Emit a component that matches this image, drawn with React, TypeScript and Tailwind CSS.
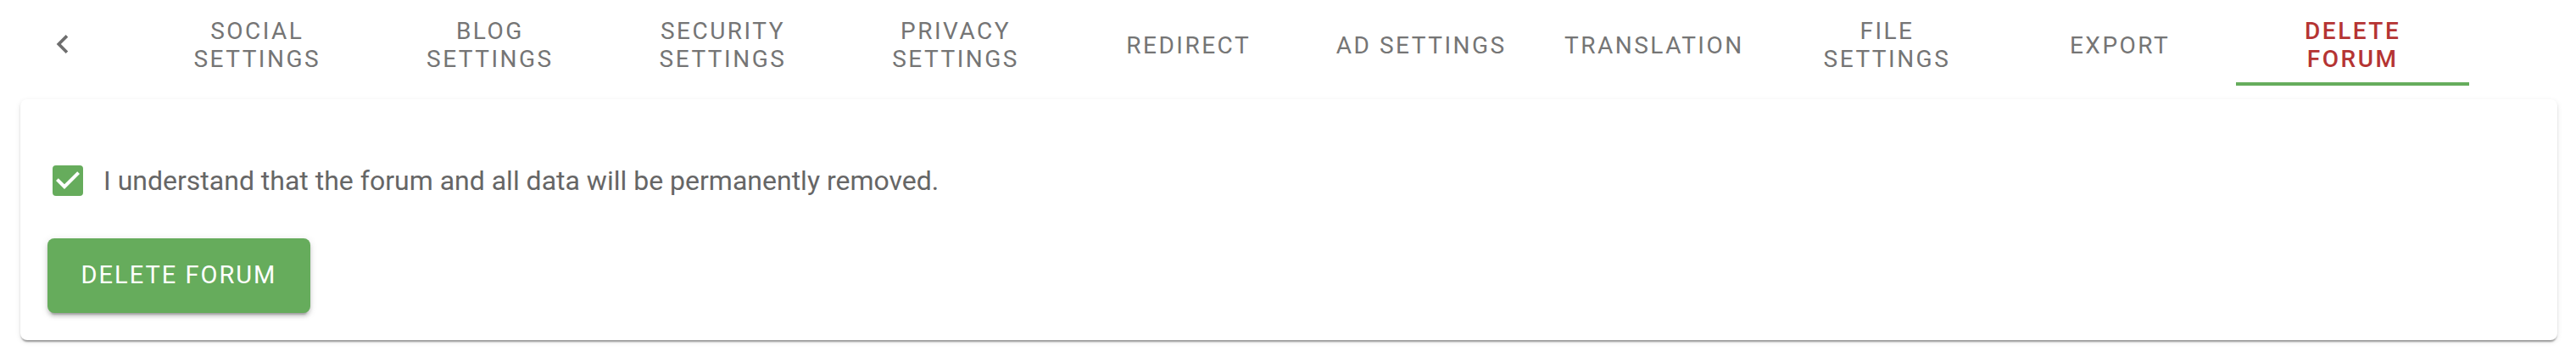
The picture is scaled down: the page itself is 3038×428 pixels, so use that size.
import React from "react";

const tabs = [
  ["SOCIAL", "SETTINGS"],
  ["BLOG", "SETTINGS"],
  ["SECURITY", "SETTINGS"],
  ["PRIVACY", "SETTINGS"],
  ["REDIRECT"],
  ["AD SETTINGS"],
  ["TRANSLATION"],
  ["FILE", "SETTINGS"],
  ["EXPORT"],
  ["DELETE", "FORUM"],
];

export default function App() {
  return (
    <div
      className="w-[3038px] h-[428px] bg-white"
      style={{ fontFamily: "Roboto, 'Liberation Sans', sans-serif" }}
    >
      <div className="flex items-start pt-[5px]">
        <div className="ml-[36px] w-[80px] h-[96px] flex items-center justify-center">
          <svg width="44" height="44" viewBox="0 0 24 24" className="ml-[-4px]">
            <path
              d="M15.41 16.09l-4.58-4.59 4.58-4.59L14 5.5l-6 6 6 6z"
              fill="#6e6e6e"
            />
          </svg>
        </div>
        <div className="ml-[50px] flex">
          {tabs.map((t, i) => {
            const selected = i === tabs.length - 1;
            return (
              <div
                key={i}
                className="relative w-[274.6px] h-[96px] flex flex-col items-center justify-center"
              >
                {t.map((line, j) => (
                  <span
                    key={j}
                    className={
                      selected
                        ? "text-[28px] leading-[33px] tracking-[2.5px] font-medium text-[#b53433]"
                        : "text-[28px] leading-[33px] tracking-[2.5px] font-normal text-[#757575]"
                    }
                  >
                    {line}
                  </span>
                ))}
                {selected && (
                  <div className="absolute left-0 right-0 bottom-0 h-[4px] bg-[#66ad5c]" />
                )}
              </div>
            );
          })}
        </div>
      </div>
      <div className="mt-[16px] ml-[24px] mr-[22px] h-[284px] bg-white rounded-[8px] shadow-[0_4px_2px_-2px_rgba(0,0,0,0.25),0_2px_2px_0_rgba(0,0,0,0.14),0_2px_6px_0_rgba(0,0,0,0.10)] pt-[72px] px-[32px]">
        <div className="flex items-center">
          <svg width="48" height="48" viewBox="0 0 24 24">
            <rect x="3" y="3" width="18" height="18" rx="2" fill="#66ac5c" />
            <path
              d="M10 17l-5-5 1.41-1.41L10 14.17l7.59-7.59L19 8l-9 9z"
              fill="#ffffff"
            />
          </svg>
          <span className="ml-[18px] text-[32px] leading-[36px] text-[#666666]">
            I understand that the forum and all data will be permanently removed.
          </span>
        </div>
        <button className="mt-[44px] w-[310px] h-[88px] rounded-[8px] bg-[#66ac5c] text-white text-[29px] tracking-[2px] font-normal flex items-center justify-center shadow-[0_6px_2px_-4px_rgba(0,0,0,0.2),0_4px_4px_0_rgba(0,0,0,0.14),0_2px_10px_0_rgba(0,0,0,0.12)]">
          DELETE FORUM
        </button>
      </div>
    </div>
  );
}
